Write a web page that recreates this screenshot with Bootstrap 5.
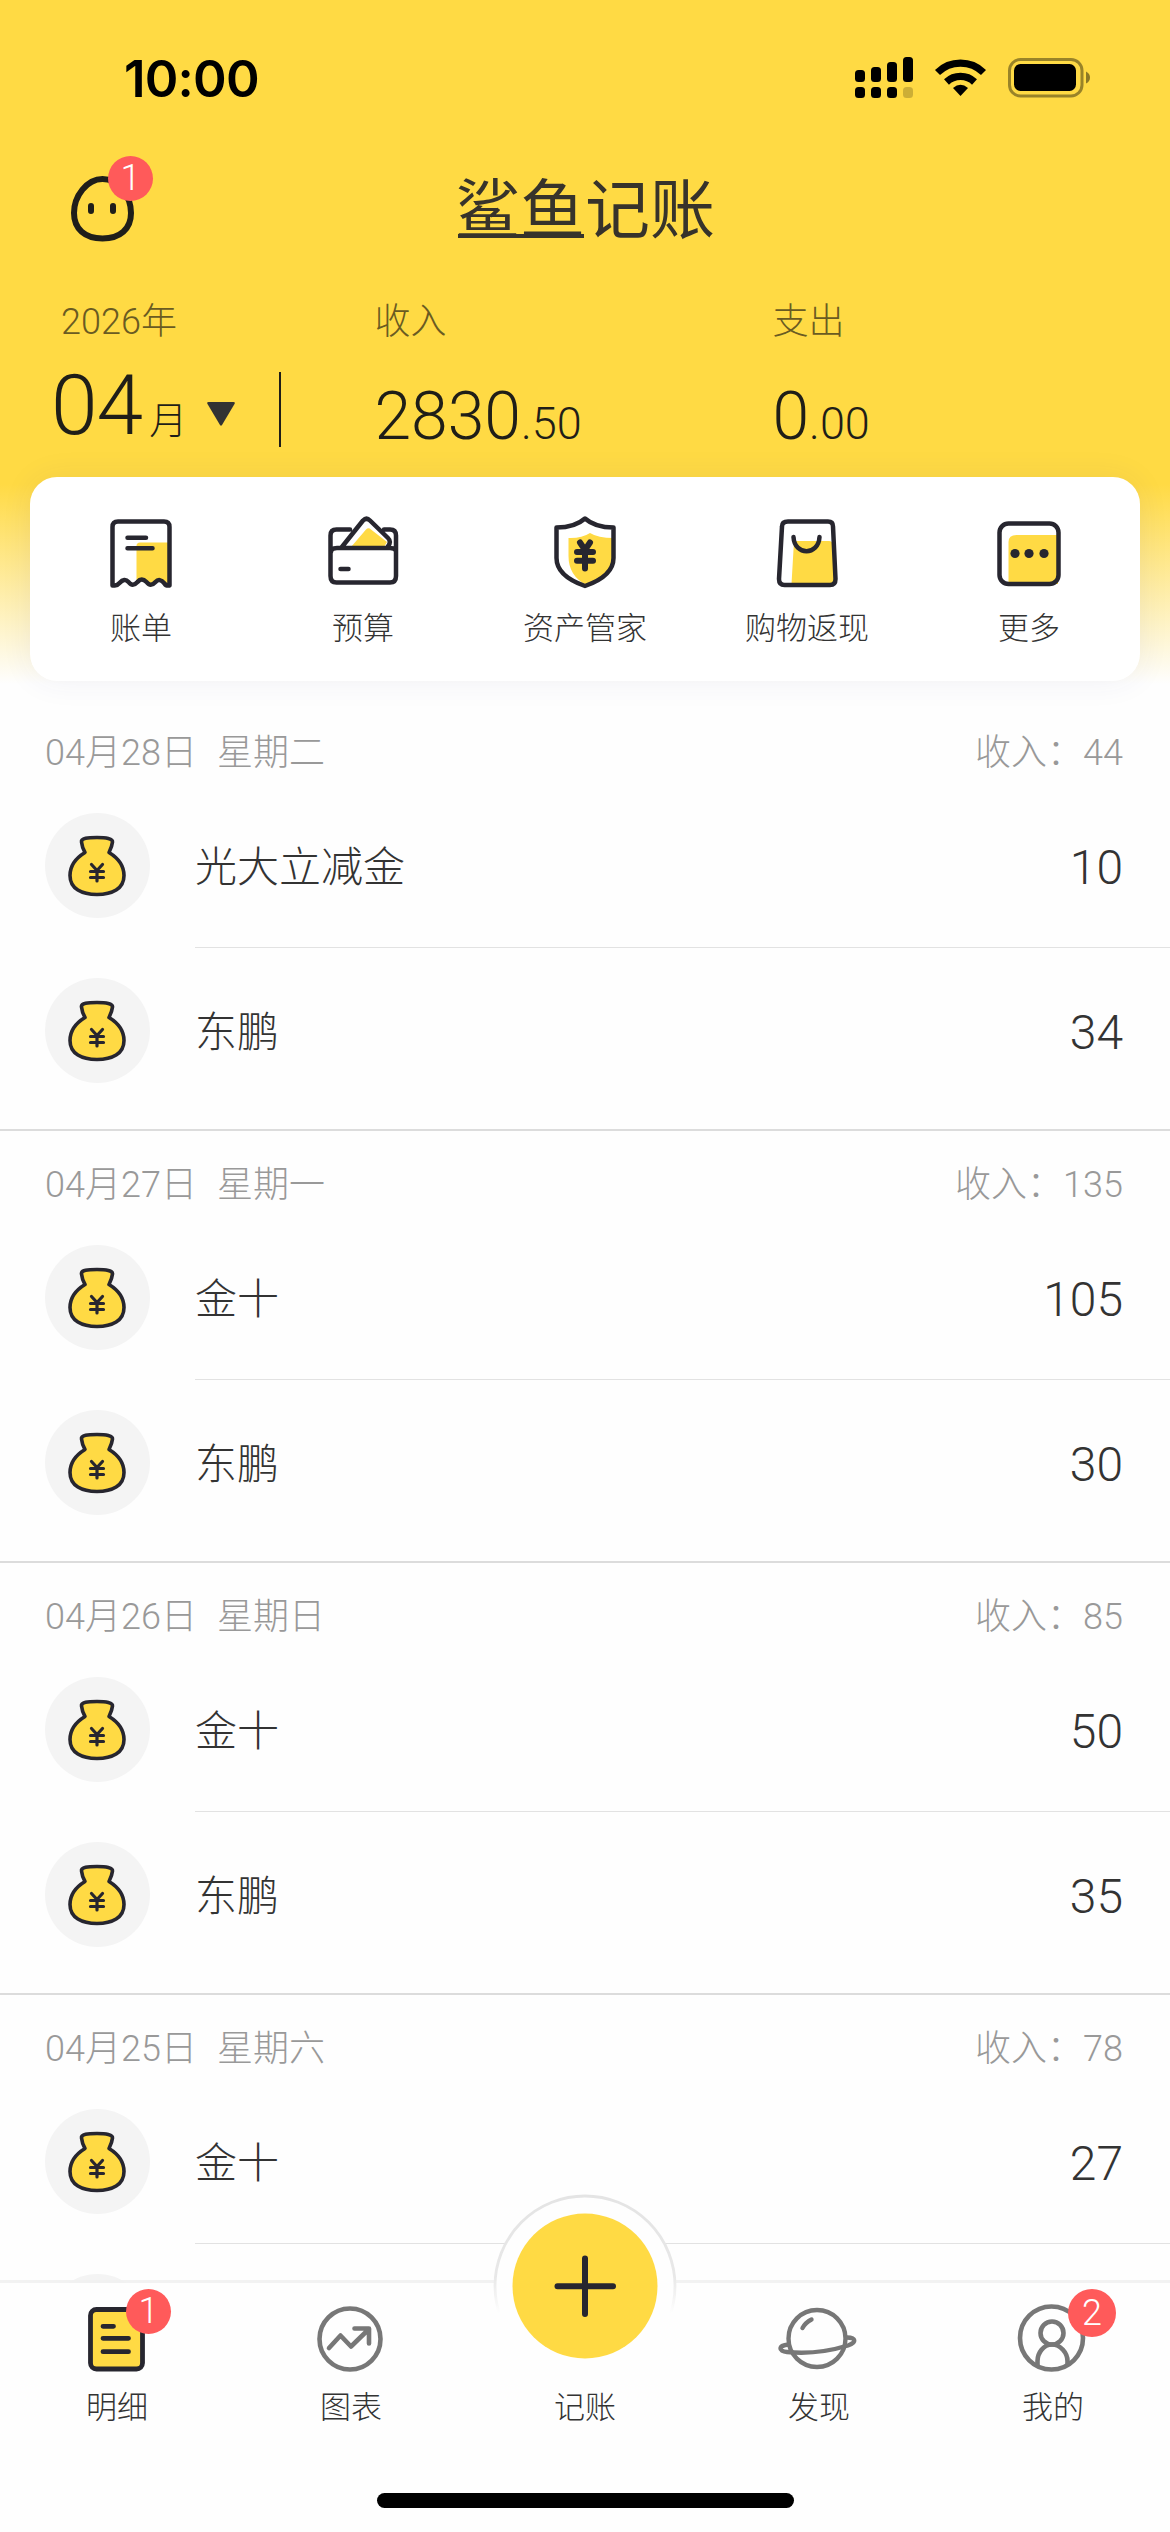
<!DOCTYPE html>
<html lang="zh-CN">
<head>
<meta charset="utf-8">
<meta name="viewport" content="width=device-width, initial-scale=1">
<title>鲨鱼记账</title>
<link href="https://cdn.jsdelivr.net/npm/bootstrap@5.3.0/dist/css/bootstrap.min.css" rel="stylesheet">
<style>
  :root { --ink:#27262f; --brand:#ffda44; --soft:#999; }
  body { margin:0; background:#fff; color:#333; font-family:Roboto,"Noto Sans CJK SC",sans-serif; font-weight:300; line-height:1; }
  svg { display:block; overflow:visible; }
  .phone { width:1170px; height:2532px; background:#fefefe; }
  .hero { height:699px; background:linear-gradient(#ffda44 0,#ffda44 484px,#fefefe 684px); }
  .statusbar { height:150px; padding:53px 79px 0 124px; color:#000; }
  .clock { font:600 51px/51px Inter,sans-serif; letter-spacing:-.8px; }
  .brandbar { height:130px; padding:26px 0 0 71px; }
  .wordmark { font:400 65px/65px "Noto Sans CJK SC",sans-serif; left:455px; top:23px; color:#37332b; white-space:nowrap; }
  .wordmark::after { content:""; position:absolute; left:3px; top:61px; width:126px; height:4px; background:#37332b; }
  .dot { background:#ff5a5a; color:#fff; font:300 36px/45px Roboto,sans-serif; width:45px; height:45px; text-align:center; }
  .dot-lg { width:48px; height:48px; line-height:49px; }
  .summary { height:197px; color:#1f1e18; }
  .caption { font-size:36px; line-height:36px; color:#6a5b22; padding-top:24px; height:86px; }
  .month { width:279px; }
  .month-num { font-size:84px; line-height:84px; letter-spacing:-1px; }
  .month-row { height:84px; padding-left:51px; margin-top:-2px; }
  .rule { width:1.5px; height:75px; background:#1f1e18; margin-top:92px; }
  .amount { font-size:66px; line-height:66px; padding-top:18px; }
  .amount span { font-size:45px; }
  .shortcuts { width:1110px; height:204px; border-radius:27px; background:#fff; box-shadow:0 0 32px rgba(60,60,130,.07); padding-top:35px; }
  .shortcuts .label { font-size:31px; line-height:31px; margin-top:21px; }
  .day { height:432px; border-bottom:2px solid #dcdcdc; }
  .day-head { height:84px; padding:36px 47px 0 45px; font-size:36px; line-height:36px; color:var(--soft); }
  .weekday { margin-left:20px; }
  .entry { height:165px; padding-left:45px; }
  .bag { width:105px; height:105px; background:#f4f4f4; }
  .entry-body { margin-left:45px; padding:5px 47px 0 0; font-size:42px; line-height:42px; }
  .entry:nth-child(2) .entry-body { border-bottom:1px solid #e2e2e2; }
  .entry-amt { font-size:48px; }
  .tabbar { height:252px; border-top:3px solid rgba(240,240,240,.85); background:#fefefe; background-clip:padding-box; }
  .tab { width:234px; padding-top:19px; font-size:31px; line-height:31px; }
  .tab-label { margin-top:10px; }
  .fab { left:490px; top:-92px; }
  .home { width:417px; height:15px; border-radius:8px; background:#000; left:377px; bottom:24px; }
</style>
</head>
<body>
<svg width="0" height="0" class="position-absolute">
  <symbol id="moneybag" viewBox="0 0 105 105">
    <path d="M36.500 29c-.7-4 6.500-4.500 15.500-4.500S68 25.500 67.500 29c-.4 4-1.500 6.500-3.500 10.500C73 45 79 53 79 62.500 79 76 67 81.500 52 81.500S25 76 25 62.500C25 53 31 45 40 39.500 38 36 37 33.500 36.500 29Z" fill="#ffda44" stroke="#27262f" stroke-width="3.600" stroke-linejoin="round"/>
    <path d="M46.500 51.500l5.500 6 5.500-6M45.500 58.500h13M45.500 64.500h13M52 58v10" fill="none" stroke="#27262f" stroke-width="3.200" stroke-linecap="round"/>
  </symbol>
</svg>
<main class="phone position-relative overflow-hidden">
  <header class="hero">
    <div class="statusbar d-flex justify-content-between">
      <div class="clock">10:00</div>
      <svg width="236" height="45" viewBox="856 53 236 45">
        <g fill="#000">
          <rect x="856" y="70" width="10" height="12" rx="3.500"/><rect x="872" y="67" width="10" height="15" rx="3.500"/><rect x="888" y="62" width="10" height="20" rx="3.500"/><rect x="904" y="57" width="10" height="25" rx="3.500"/>
          <rect x="856" y="87" width="10" height="11" rx="3.500"/><rect x="872" y="87" width="10" height="11" rx="3.500"/><rect x="888" y="87" width="10" height="11" rx="3.500"/><rect x="904" y="87" width="10" height="11" rx="3.500" opacity=".2"/>
        </g>
        <path d="M938.500 72.500a33 33 0 0 1 46 0M947.500 82a20.500 20.500 0 0 1 28 0" fill="none" stroke="#000" stroke-width="7.200"/>
        <path d="M961.500 96l-7.500-8q7.500-6.500 15 0z" fill="#000"/>
        <rect x="1010.500" y="59.500" width="72.500" height="36.500" rx="11" fill="none" stroke="#000" stroke-opacity=".4" stroke-width="3"/>
        <rect x="1015" y="64" width="62" height="27" rx="6.500"/>
        <path d="M1087 71.500q4 2 4 6t-4 6z" opacity=".45"/>
      </svg>
    </div>
    <div class="brandbar position-relative">
      <div class="position-relative d-inline-block">
        <svg width="64" height="66" viewBox="0 0 64 66">
          <path d="M31.500 3C47 3 60 20 60 37c0 16-11 25.500-28.500 25.500S3 53 3 37C3 20 16 3 31.500 3Z" fill="none" stroke="#1f1e1a" stroke-width="6"/>
          <path d="M20 30v5M42 30v5" stroke="#1f1e1a" stroke-width="6" stroke-linecap="round"/>
        </svg>
        <span class="dot rounded-circle position-absolute" style="left:37px;top:-20px">1</span>
      </div>
      <h1 class="wordmark position-absolute m-0">鲨鱼记账</h1>
    </div>
    <div class="summary d-flex">
      <div class="month">
        <div class="caption" style="padding-left:61px">2026年</div>
        <div class="month-row d-flex align-items-baseline">
          <span class="month-num">04</span><span style="font-size:38px;margin-left:7px">月</span>
          <svg width="28" height="32" viewBox="0 0 28 32" style="margin-left:20px"><path d="M1.500 0h25q2 0 1 2L15 23q-1 1.500-2 0L.5 2q-1-2 1-2Z" fill="#333"/></svg>
        </div>
      </div>
      <div class="rule"></div>
      <div style="margin-left:94px;width:398px">
        <div class="caption">收入</div>
        <div class="amount">2830<span>.50</span></div>
      </div>
      <div>
        <div class="caption">支出</div>
        <div class="amount">0<span>.00</span></div>
      </div>
    </div>
    <nav class="shortcuts mx-auto d-flex text-center">
      <div class="col">
        <svg class="mx-auto" width="80" height="80" viewBox="0 0 80 80" fill="none" stroke="#27262f" stroke-width="4.500" stroke-linejoin="round" stroke-linecap="round">
          <path d="M35.500 34q0-3.500 3.500-3.500h29V73L58 68l-9 5-8.500-5-5 3z" fill="#ffda44" stroke="none"/>
          <path d="M11.500 73.500V15q0-5.500 5.500-5.500h46q5.500 0 5.500 5.500v58.500q-3.500.500-5-2-5-6-9-1.500-5 5.500-9 0-5-5-9 0-5 5.500-9 0-4-4.500-9 1-3 3.500-7 2Z"/>
          <path d="M26.500 25.800H45M26.500 36.300H51.500"/>
        </svg>
        <div class="label">账单</div>
      </div>
      <div class="col">
        <svg class="mx-auto" width="80" height="80" viewBox="0 0 80 80" fill="none" stroke="#27262f" stroke-width="4.500" stroke-linejoin="round" stroke-linecap="round">
          <path d="M28 35L43 17.500q2.500-2.500 5 0L64 30l-3 5z" fill="#ffda44" stroke="none"/>
          <path d="M27 17.500H13.500q-6 0-6 6V64q0 6.500 6 6.500h53.500q6 0 6-6.500V23.500q0-6-6-6h-6M8 40q0-4 6-4h53q6 0 6 4M18.500 35.500L40 8.500q3.500-3.500 7 0L65 26q4 4-.5 9"/>
          <path d="M17.500 57h8"/>
        </svg>
        <div class="label">预算</div>
      </div>
      <div class="col">
        <svg class="mx-auto" width="80" height="80" viewBox="0 0 80 80" fill="none" stroke="#27262f" stroke-width="4.500" stroke-linejoin="round" stroke-linecap="round">
          <path d="M23.500 26q13 .500 21.500-5 8 5 23.500 5v20q0 17-27 27-18-9-18-29z" fill="#ffda44" stroke="none"/>
          <path d="M40 6.500q-10 9-28.500 9V46q0 18 28.500 28 28.500-10 28.500-28V15.500Q50 15.500 40 6.500Z"/>
          <path d="M35 30.500l5 7.500 5-7.500M32 40h16M32 48.700h16M40 38v18.500" stroke-width="6"/>
        </svg>
        <div class="label">资产管家</div>
      </div>
      <div class="col">
        <svg class="mx-auto" width="80" height="80" viewBox="0 0 80 80" fill="none" stroke="#27262f" stroke-width="4.500" stroke-linejoin="round" stroke-linecap="round">
          <path d="M27 29h35q3.500 0 3.700 3.500L68 72H24.500z" fill="#ffda44" stroke="none"/>
          <path d="M21 9.500h40q5 0 5 5L68.500 67q0 6-5.500 6H17.500q-5.500 0-5.500-6L15 14.500q0-5 6-5Z"/>
          <path d="M26.500 25c1 19 25 19 26 0"/>
        </svg>
        <div class="label">购物返现</div>
      </div>
      <div class="col">
        <svg class="mx-auto" width="80" height="80" viewBox="0 0 80 80" fill="none" stroke="#27262f" stroke-width="4.500">
          <path d="M19.500 30q0-7 8-7H69v49H19.500z" fill="#ffda44" stroke="none"/>
          <rect x="10.500" y="11.500" width="59" height="60.500" rx="9"/>
          <g fill="#27262f" stroke="none"><circle cx="26" cy="41.500" r="4.600"/><circle cx="40" cy="41.500" r="4.600"/><circle cx="55" cy="41.500" r="4.600"/></g>
        </svg>
        <div class="label">更多</div>
      </div>
    </nav>
  </header>

  <section class="day">
    <div class="day-head d-flex justify-content-between"><div>04月28日<span class="weekday">星期二</span></div><span>收入：44</span></div>
    <div class="entry d-flex align-items-center"><svg class="bag rounded-circle flex-shrink-0"><use href="#moneybag"/></svg><div class="entry-body d-flex flex-fill h-100 align-items-center justify-content-between"><span>光大立减金</span><span class="entry-amt">10</span></div></div>
    <div class="entry d-flex align-items-center"><svg class="bag rounded-circle flex-shrink-0"><use href="#moneybag"/></svg><div class="entry-body d-flex flex-fill h-100 align-items-center justify-content-between"><span>东鹏</span><span class="entry-amt">34</span></div></div>
  </section>
  <section class="day">
    <div class="day-head d-flex justify-content-between"><div>04月27日<span class="weekday">星期一</span></div><span>收入：135</span></div>
    <div class="entry d-flex align-items-center"><svg class="bag rounded-circle flex-shrink-0"><use href="#moneybag"/></svg><div class="entry-body d-flex flex-fill h-100 align-items-center justify-content-between"><span>金十</span><span class="entry-amt">105</span></div></div>
    <div class="entry d-flex align-items-center"><svg class="bag rounded-circle flex-shrink-0"><use href="#moneybag"/></svg><div class="entry-body d-flex flex-fill h-100 align-items-center justify-content-between"><span>东鹏</span><span class="entry-amt">30</span></div></div>
  </section>
  <section class="day">
    <div class="day-head d-flex justify-content-between"><div>04月26日<span class="weekday">星期日</span></div><span>收入：85</span></div>
    <div class="entry d-flex align-items-center"><svg class="bag rounded-circle flex-shrink-0"><use href="#moneybag"/></svg><div class="entry-body d-flex flex-fill h-100 align-items-center justify-content-between"><span>金十</span><span class="entry-amt">50</span></div></div>
    <div class="entry d-flex align-items-center"><svg class="bag rounded-circle flex-shrink-0"><use href="#moneybag"/></svg><div class="entry-body d-flex flex-fill h-100 align-items-center justify-content-between"><span>东鹏</span><span class="entry-amt">35</span></div></div>
  </section>
  <section class="day">
    <div class="day-head d-flex justify-content-between"><div>04月25日<span class="weekday">星期六</span></div><span>收入：78</span></div>
    <div class="entry d-flex align-items-center"><svg class="bag rounded-circle flex-shrink-0"><use href="#moneybag"/></svg><div class="entry-body d-flex flex-fill h-100 align-items-center justify-content-between"><span>金十</span><span class="entry-amt">27</span></div></div>
    <div class="entry d-flex align-items-center"><div class="bag rounded-circle flex-shrink-0"></div></div>
  </section>

  <nav class="tabbar position-absolute bottom-0 start-0 w-100">
    <svg class="fab position-absolute" width="190" height="190" viewBox="0 0 190 190">
      <defs><linearGradient id="ringFade" x1="0" y1="0" x2="0" y2="1"><stop offset="0" stop-color="#e4e4e4"/><stop offset=".45" stop-color="#e8e8e8"/><stop offset=".65" stop-color="#fefefe"/></linearGradient></defs>
      <circle cx="95" cy="95" r="90" fill="#fefefe" stroke="url(#ringFade)" stroke-width="2.800"/>
      <circle cx="95" cy="95" r="72.500" fill="#ffda44"/>
      <path d="M95 67.500v55.500M67.500 95.300h55.500" stroke="#27262f" stroke-width="6" stroke-linecap="round"/>
    </svg>
    <div class="d-flex text-center">
      <div class="tab position-relative">
        <svg class="mx-auto" width="80" height="80" viewBox="0 0 80 80" fill="none" stroke="#27262f" stroke-width="4.800" stroke-linecap="round">
          <rect x="13.500" y="7.500" width="52" height="59.500" rx="6" fill="#ffda44"/>
          <path d="M26 24.300h10.500M26 36.300h25.500M26 49.700h25.500"/>
        </svg>
        <span class="dot rounded-circle position-absolute" style="left:126px;top:6px">1</span>
        <div class="tab-label">明细</div>
      </div>
      <div class="tab">
        <svg class="mx-auto" width="80" height="80" viewBox="0 0 80 80" fill="none" stroke="#777" stroke-width="4.600" stroke-linecap="round" stroke-linejoin="round">
          <circle cx="39" cy="37" r="30.500"/>
          <path d="M18 46L29.500 33.500 40 44.500 58 27M43.500 26.500H58V41.500"/>
        </svg>
        <div class="tab-label">图表</div>
      </div>
      <div class="tab"><div style="height:80px"></div><div class="tab-label">记账</div></div>
      <div class="tab">
        <svg class="mx-auto" width="80" height="80" viewBox="0 0 80 80" fill="none" stroke="#777" stroke-width="4.400" stroke-linecap="round" stroke-linejoin="round">
          <circle cx="38" cy="36.500" r="28.500"/>
          <path d="M23.500 26q3-5.500 9-8.500M9.500 42.500C-1 43.500-1 49 8 50c20 2 43-1 61-6.500 9-3 8-8-1-8"/>
        </svg>
        <div class="tab-label">发现</div>
      </div>
      <div class="tab position-relative">
        <svg class="mx-auto" width="80" height="80" viewBox="0 0 80 80" fill="none" stroke="#777" stroke-width="4.600">
          <circle cx="38.500" cy="36" r="31.500"/>
          <circle cx="39" cy="31" r="11.500"/>
          <path d="M24.500 63V59c0-8 6-16.500 14.500-16.500S54.500 51 54.500 59v3"/>
        </svg>
        <span class="dot dot-lg rounded-circle position-absolute" style="left:132px;top:6px">2</span>
        <div class="tab-label">我的</div>
      </div>
    </div>
    <div class="home position-absolute"></div>
  </nav>
</main>
<script src="https://cdn.jsdelivr.net/npm/bootstrap@5.3.0/dist/js/bootstrap.bundle.min.js"></script>
</body>
</html>
